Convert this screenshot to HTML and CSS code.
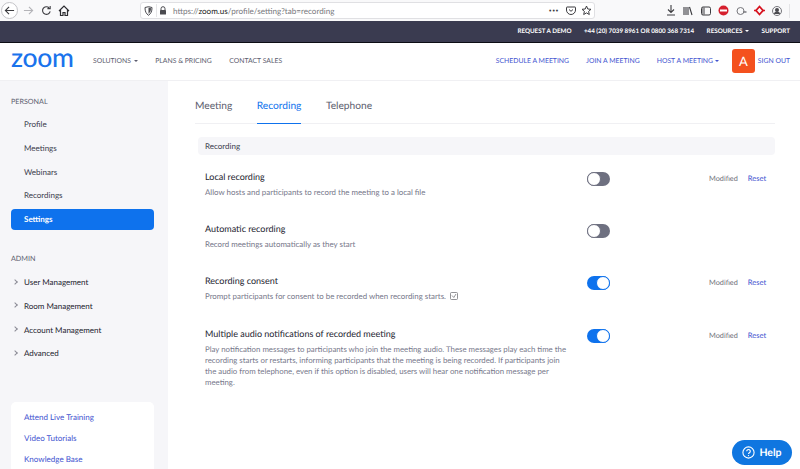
FILE: index.html
```html
<!DOCTYPE html>
<html lang="en">
<head>
    <meta charset="UTF-8">
    <meta name="viewport" content="width=device-width, initial-scale=1.0">
    <title>Settings - Zoom</title>
    <link rel="stylesheet" href="styles.css">
</head>
<body>
    <div class="browser">
        <div class="browser-nav">
            <span class="back-btn">
                <svg width="11" height="11" viewBox="0 0 12 12"><path d="M11 6H1.5M5.5 2 1.5 6l4 4" fill="none" stroke="#3c3c40" stroke-width="1.2"/></svg>
            </span>
            <svg class="forward" width="11" height="11" viewBox="0 0 12 12"><path d="M1 6h9.5M6.5 2l4 4-4 4" fill="none" stroke="#b4b4b8" stroke-width="1.2"/></svg>
            <svg class="reload" width="11" height="11" viewBox="0 0 12 12"><path d="M10 7a4.2 4.2 0 1 1-1.2-4M10 1v3H7" fill="none" stroke="#3c3c40" stroke-width="1.2"/></svg>
            <svg class="home" width="12" height="11" viewBox="0 0 12 11"><path d="M1 6l5-5 5 5M2.5 5v5.500h2.500V7.500h2v3h2.500V5" fill="none" stroke="#2c2c30" stroke-width="1.200"/></svg>
        </div>
        <div class="urlbar">
            <svg class="shield" width="9" height="10" viewBox="0 0 9 10"><path d="M1 1.500 4.500.7 8 1.500c0 4-1 6-3.500 7.800C2 7.500 1 5.500 1 1.500z" fill="none" stroke="#4a4a4f" stroke-width="1"/><path d="M4.500 1.500 7 2.200c0 2.500-.8 4-2.500 5.500z" fill="#4a4a4f"/></svg>
            <span class="url-sep"></span>
            <svg class="lock" width="8" height="9" viewBox="0 0 8 9"><path d="M2 4V2.700a2 2 0 0 1 4 0V4" fill="none" stroke="#4a4a4f" stroke-width="1"/><rect x="1" y="4" width="6" height="4.500" rx=".6" fill="#4a4a4f"/></svg>
            <span class="url-text">https://<b>zoom.us</b>/profile/setting?tab=recording</span>
            <span class="url-dots">•••</span>
            <svg class="pocket" width="10" height="9" viewBox="0 0 10 9"><path d="M1 1h8a.5.5 0 0 1 .5.500V4a4.500 4.500 0 0 1-9 0V1.500A.5.5 0 0 1 1 1z" fill="none" stroke="#3c3c40"/><path d="M3 3.500 5 5.300 7 3.500" fill="none" stroke="#3c3c40"/></svg>
            <svg class="star" width="11" height="11" viewBox="0 0 11 11"><path d="M5.500 1l1.300 3 3.200.3-2.400 2.100.7 3.100-2.800-1.600-2.800 1.600.7-3.100L1 4.300 4.200 4z" fill="none" stroke="#3c3c40"/></svg>
        </div>
        <div class="browser-tools">
            <svg width="10" height="11" viewBox="0 0 10 11"><path d="M5 0v7M2 4.500 5 7.500 8 4.500M1 10h8" fill="none" stroke="#3c3c40" stroke-width="1.100"/></svg>
            <svg width="11" height="10" viewBox="0 0 11 10"><path d="M1 1v8M3 1v8M5 1v8M6.500 1l2.500 8" fill="none" stroke="#3c3c40" stroke-width="1.100"/></svg>
            <svg width="10" height="10" viewBox="0 0 10 10"><rect x=".5" y="1" width="9" height="8" rx="1.500" fill="none" stroke="#3c3c40"/><path d="M1 1.500h3v7H1z" fill="#3c3c40" opacity=".5"/></svg>
            <svg width="11" height="11" viewBox="0 0 11 11"><circle cx="5.500" cy="5.500" r="5" fill="#d6202e"/><rect x="2" y="4.500" width="7" height="2" fill="#fff"/></svg>
            <svg width="11" height="10" viewBox="0 0 11 10"><circle cx="4.500" cy="5" r="3.500" fill="none" stroke="#77777c"/><path d="M7 6h3.500" stroke="#77777c" stroke-width="1.500"/></svg>
            <svg width="11" height="11" viewBox="0 0 11 11"><path d="M5.500 1.500 9 5.500 5.500 9.500 2 5.500z" fill="none" stroke="#d6121f" stroke-width="1.800"/><path d="M0 5.500h3M8 5.500h3" stroke="#d6121f" stroke-width="1.500"/></svg>
            <svg width="10" height="10" viewBox="0 0 10 10"><circle cx="5" cy="5" r="4.500" fill="none" stroke="#77777c"/><circle cx="5" cy="4" r="2" fill="#4a4a4f"/><path d="M2 8a3 2.500 0 0 1 6 0z" fill="#4a4a4f"/></svg>
            <span class="tool-sep"></span>
        </div>
    </div>

    <div class="topbar">
        <a>REQUEST A DEMO</a>
        <a>+44 (20) 7039 8961 OR 0800 368 7314</a>
        <a>RESOURCES <i class="caret"></i></a>
        <a>SUPPORT</a>
    </div>

    <div class="nav">
        <div class="logo">zoom</div>
        <div class="nav-left">
            <a>SOLUTIONS <i class="caret"></i></a>
            <a>PLANS &amp; PRICING</a>
            <a>CONTACT SALES</a>
        </div>
        <div class="nav-right">
            <a>SCHEDULE A MEETING</a>
            <a>JOIN A MEETING</a>
            <a>HOST A MEETING <i class="caret"></i></a>
        </div>
        <div class="avatar">A</div>
        <a class="signout">SIGN OUT</a>
    </div>

    <div class="page">
        <div class="sidebar">
            <div class="side-title">PERSONAL</div>
            <a class="side-item">Profile</a>
            <a class="side-item">Meetings</a>
            <a class="side-item">Webinars</a>
            <a class="side-item">Recordings</a>
            <a class="side-item active">Settings</a>
            <div class="side-title admin">ADMIN</div>
            <a class="side-item more">User Management</a>
            <a class="side-item more">Room Management</a>
            <a class="side-item more">Account Management</a>
            <a class="side-item more">Advanced</a>
            <div class="side-card">
                <a>Attend Live Training</a>
                <a>Video Tutorials</a>
                <a>Knowledge Base</a>
            </div>
        </div>

        <div class="main">
            <div class="tabs">
                <a class="tab">Meeting</a>
                <a class="tab current">Recording</a>
                <a class="tab">Telephone</a>
            </div>
            <div class="section-head">Recording</div>

            <div class="row">
                <div class="info">
                    <h3>Local recording</h3>
                    <p>Allow hosts and participants to record the meeting to a local file</p>
                </div>
                <span class="toggle"></span>
                <div class="status"><span>Modified</span><a>Reset</a></div>
            </div>
            <div class="row">
                <div class="info">
                    <h3>Automatic recording</h3>
                    <p>Record meetings automatically as they start</p>
                </div>
                <span class="toggle"></span>
            </div>
            <div class="row">
                <div class="info">
                    <h3>Recording consent</h3>
                    <p>Prompt participants for consent to be recorded when recording starts. <svg class="check" width="8" height="8" viewBox="0 0 8 8"><rect x=".5" y=".5" width="7" height="7" rx="1" fill="none" stroke="#77777c" stroke-width=".8"/><path d="M2 3.500 3.800 5.500 6 2" fill="none" stroke="#77777c" stroke-width=".8"/></svg></p>
                </div>
                <span class="toggle on"></span>
                <div class="status"><span>Modified</span><a>Reset</a></div>
            </div>
            <div class="row last">
                <div class="info">
                    <h3>Multiple audio notifications of recorded meeting</h3>
                    <p>Play notification messages to participants who join the meeting audio. These messages play each time the recording starts or restarts, informing participants that the meeting is being recorded. If participants join the audio from telephone, even if this option is disabled, users will hear one notification message per meeting.</p>
                </div>
                <span class="toggle on"></span>
                <div class="status"><span>Modified</span><a>Reset</a></div>
            </div>
        </div>
    </div>

    <a class="help">
        <svg width="13" height="13" viewBox="0 0 13 13"><circle cx="6.500" cy="6.500" r="5.600" fill="none" stroke="#fff" stroke-width="1.100"/><path d="M4.700 5.200a1.800 1.700 0 1 1 2.700 1.500c-.6.400-.9.700-.9 1.300" fill="none" stroke="#fff" stroke-width="1.100"/><circle cx="6.500" cy="9.600" r=".7" fill="#fff"/></svg>
        Help
    </a>
</body>
</html>
```

FILE: styles.css
```css
html, body {
    height: 100%;
}
body {
    margin: 0;
    height: 469px;
    overflow: hidden;
    position: relative;
    font-family: Lato, "Open Sans", sans-serif;
    text-rendering: geometricPrecision;
    background-color: #fff;
    color: #23232f;
}
a {
    text-decoration: none;
    white-space: nowrap;
}

/* browser chrome */
.browser {
    height: 21px;
    background-color: #f9f9fa;
    display: flex;
    align-items: center;
    box-sizing: border-box;
}
.browser-nav {
    width: 140px;
    display: flex;
    align-items: center;
    flex: none;
}
.back-btn {
    width: 17px;
    height: 17px;
    margin-left: 1px;
    border: 1px solid #c4c4c8;
    border-radius: 50%;
    box-sizing: border-box;
    background-color: #fff;
    display: flex;
    align-items: center;
    justify-content: center;
}
.forward {
    margin-left: 5px;
}
.reload {
    margin-left: 7px;
}
.home {
    margin-left: 6px;
}
.urlbar {
    width: 455px;
    height: 17px;
    box-sizing: border-box;
    background-color: #fff;
    border: 1px solid #e0e0e3;
    border-radius: 3px;
    display: flex;
    align-items: center;
    padding-left: 3px;
    flex: none;
}
.url-sep {
    width: 1px;
    height: 13px;
    background-color: #e6e6e8;
    margin: 0 2px 0 3px;
}
.url-text {
    margin-left: 6px;
    font-size: 8.100px;
    color: #77777c;
    flex: 1;
}
.url-text b {
    font-weight: 400;
    color: #222;
}
.url-dots {
    font-size: 5px;
    letter-spacing: 0.5px;
    color: #3c3c40;
}
.pocket {
    margin-left: 7px;
}
.star {
    margin-left: 5px;
    margin-right: 2px;
}
.browser-tools {
    display: flex;
    align-items: center;
    gap: 7px;
    margin-left: 71px;
}
.tool-sep {
    width: 1px;
    height: 14px;
    background-color: #e4e4e6;
}

/* dark top bar */
.topbar {
    height: 22px;
    box-sizing: border-box;
    background-color: #3a3b50;
    border-bottom: 1px solid #0d0d14;
    display: flex;
    align-items: center;
    justify-content: flex-end;
    gap: 12.500px;
    padding-right: 10px;
}
.topbar a {
    font-size: 6.250px;
    font-weight: 700;
    color: #fff;
}
.caret {
    display: inline-block;
    border-left: 2px solid transparent;
    border-right: 2px solid transparent;
    border-top: 2px solid currentColor;
    vertical-align: middle;
    margin-left: 1px;
}

/* main nav */
.nav {
    height: 38px;
    box-sizing: border-box;
    border-bottom: 1px solid #f0f0f3;
    padding-bottom: 1px;
    display: flex;
    align-items: center;
}
.logo {
    margin-left: 11px;
    width: 82px;
    font-size: 26.500px;
    line-height: 30px;
    height: 30px;
    margin-top: -8px;
    font-weight: 500;
    color: #1a73ec;
    letter-spacing: -0.3px;
}
.nav-left {
    display: flex;
    gap: 17.500px;
}
.nav-left a {
    font-size: 6.850px;
    color: #5c5d6e;
}
.nav-right {
    margin-left: auto;
    display: flex;
    gap: 17px;
}
.nav-right a, .signout {
    font-size: 6.850px;
    color: #4354d0;
}
.nav-right .caret {
    margin-left: 0;
}
.avatar {
    width: 23px;
    height: 24px;
    margin-left: 13px;
    background-color: #f4511e;
    border-radius: 3px;
    color: #fff;
    font-size: 13px;
    display: flex;
    align-items: center;
    justify-content: center;
}
.signout {
    margin-left: 3px;
    margin-right: 10px;
}

/* layout */
.page {
    display: flex;
    height: 389px;
}
.sidebar {
    width: 168px;
    flex: none;
    box-sizing: border-box;
    background-color: #f6f6f9;
    padding: 15px 14px 0 11px;
}
.side-title {
    font-size: 7.200px;
    color: #5c5d6e;
    line-height: 12px;
    margin-bottom: 5.500px;
}
.side-title.admin {
    margin-top: 23px;
    margin-bottom: 7px;
}
.side-item {
    display: flex;
    align-items: center;
    height: 21px;
    margin-bottom: 2.750px;
    padding-left: 13px;
    font-size: 8px;
    color: #3a3b4c;
    position: relative;
}
.side-item.active {
    background-color: #0e72ed;
    border-radius: 4px;
    color: #fff;
    font-weight: 700;
}
.side-item.more {
    color: #23232f;
}
.side-item.more::before {
    content: "";
    position: absolute;
    left: 2px;
    top: 8px;
    width: 3px;
    height: 3px;
    border-top: 1px solid #8a8a95;
    border-right: 1px solid #8a8a95;
    transform: rotate(45deg);
}
.side-card {
    margin-top: 38.500px;
    background-color: #fff;
    border-radius: 5px;
    padding: 9px 13px 20px;
    display: flex;
    flex-direction: column;
    gap: 9px;
}
.side-card a {
    font-size: 8.050px;
    line-height: 12px;
    color: #4354d0;
}

.main {
    flex: 1;
    padding: 0 25px 0 27px;
}
.tabs {
    display: flex;
    gap: 24.500px;
    height: 43px;
    box-sizing: border-box;
    border-bottom: 1px solid #f0f0f3;
}
.tab {
    font-size: 10.200px;
    color: #5c5d6e;
    line-height: 16px;
    padding-top: 17px;
    height: 43px;
    box-sizing: border-box;
}
.tab.current {
    color: #0e72ed;
    border-bottom: 1px solid #0e72ed;
}
.section-head {
    margin: 13px 0 0 3px;
    height: 18px;
    line-height: 18px;
    padding-left: 7px;
    background-color: #f6f6f9;
    border-radius: 4px;
    font-size: 8px;
    color: #3a3b4c;
}

/* setting rows */
.row {
    display: flex;
    margin-left: 10px;
    height: 52px;
    align-items: flex-start;
}
.section-head + .row {
    margin-top: 15px;
}
.row.last {
    margin-top: 1px;
}
.row.last p {
    font-size: 7.830px;
}
.info {
    width: 382px;
    flex: none;
}
.info h3 {
    margin: 0;
    font-size: 9px;
    line-height: 14px;
    font-weight: 400;
    color: #23232f;
}
.info p {
    margin: 2.500px 0 0;
    width: 368px;
    font-size: 7.900px;
    line-height: 11.300px;
    color: #76778a;
}
.check {
    vertical-align: -1px;
    margin-left: 2px;
}
.toggle {
    width: 23px;
    height: 14px;
    box-sizing: border-box;
    border-radius: 7px;
    background-color: #6e7080;
    flex: none;
    margin-top: 2px;
    position: relative;
}
.toggle::after {
    content: "";
    position: absolute;
    left: 0;
    top: 0;
    width: 14px;
    height: 14px;
    box-sizing: border-box;
    border-radius: 50%;
    background-color: #fff;
    border: 1px solid #6e7080;
}
.toggle.on {
    background-color: #0e72ed;
}
.toggle.on::after {
    left: auto;
    right: 0;
    border-color: #0e72ed;
}
.status {
    margin-left: 99px;
    display: flex;
    gap: 10px;
    font-size: 7.300px;
    line-height: 11px;
    margin-top: 3px;
    color: #6e6e78;
}
.status a {
    font-size: 7.600px;
    color: #4354d0;
}

.help {
    position: absolute;
    left: 732px;
    top: 440px;
    width: 60px;
    height: 25px;
    box-sizing: border-box;
    border-radius: 13px;
    background-color: #0f76e0;
    color: #fff;
    font-size: 10.500px;
    font-weight: 700;
    display: flex;
    align-items: center;
    justify-content: center;
    gap: 4px;
}
```
